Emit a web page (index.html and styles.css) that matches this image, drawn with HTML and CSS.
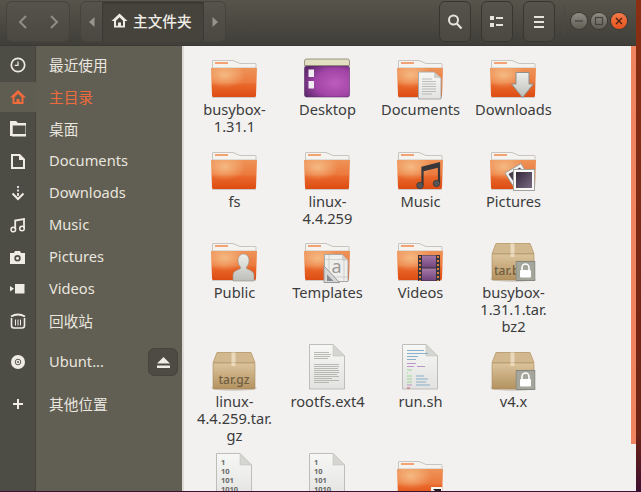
FILE: index.html
```html
<!DOCTYPE html>
<html lang="zh">

<head>
    <meta charset="UTF-8">
    <meta name="viewport" content="width=device-width, initial-scale=1.0">
    <title>主文件夹</title>
    <link rel="stylesheet" href="styles.css">
</head>

<body>
    <!-- Shared pieces of the file icons -->
    <svg class="defs" xmlns="http://www.w3.org/2000/svg">
        <defs>
            <linearGradient id="folderBody" x1="0" y1="0" x2="0" y2="1">
                <stop offset="0" stop-color="#ee9358" />
                <stop offset="0.5" stop-color="#ec7a3e" />
                <stop offset="0.58" stop-color="#e9672a" />
                <stop offset="1" stop-color="#dd4c12" />
            </linearGradient>
            <radialGradient id="folderGlow" cx="0.3" cy="0.25" r="0.45">
                <stop offset="0" stop-color="#f8cf9a" stop-opacity="0.7" />
                <stop offset="1" stop-color="#f8cf9a" stop-opacity="0" />
            </radialGradient>
            <radialGradient id="desktopBody" cx="0.68" cy="0.55" r="0.75">
                <stop offset="0" stop-color="#bd5cbb" />
                <stop offset="0.6" stop-color="#a044a6" />
                <stop offset="1" stop-color="#5f2a6e" />
            </radialGradient>
            <linearGradient id="paper" x1="0" y1="0" x2="0" y2="1">
                <stop offset="0" stop-color="#f7f7f6" />
                <stop offset="1" stop-color="#e2e2e0" />
            </linearGradient>
            <linearGradient id="emblemGray" x1="0" y1="0" x2="0" y2="1">
                <stop offset="0" stop-color="#eeeeec" />
                <stop offset="1" stop-color="#bdbdb9" />
            </linearGradient>
            <linearGradient id="photo" x1="0" y1="0" x2="1" y2="1">
                <stop offset="0" stop-color="#34283a" />
                <stop offset="1" stop-color="#7a6a84" />
            </linearGradient>
            <linearGradient id="boxBody" x1="0" y1="0" x2="0" y2="1">
                <stop offset="0" stop-color="#dcc49c" />
                <stop offset="1" stop-color="#b3925f" />
            </linearGradient>
            <linearGradient id="filmFrame" x1="0" y1="0" x2="0" y2="1">
                <stop offset="0" stop-color="#a678a8" />
                <stop offset="1" stop-color="#71447c" />
            </linearGradient>

            <symbol id="folder" viewBox="0 0 48 48">
                <path d="M2.5 16V9Q2.5 8.500 3 8.500H23L30 11.500H45.500Q46 11.500 46 12V16Z" fill="#f5f3f0" stroke="#c8c4bf" />
                <rect x="5" y="10" width="13" height="2" fill="#f3a274" />
                <path d="M1 16H47L46 43.500Q46 45 44.500 45H3.500Q2 45 2 43.500Z" fill="url(#folderBody)" />
                <path d="M1 16H47L46 43.500Q46 45 44.500 45H3.500Q2 45 2 43.500Z" fill="url(#folderGlow)" />
                <path d="M2 45.500H46" stroke="#cfcac5" />
            </symbol>

            <symbol id="box" viewBox="0 0 48 48">
                <ellipse cx="24" cy="44" rx="23" ry="3" fill="#d4d1cc" />
                <path d="M7 8.500H41L45 19H3Z" fill="#d2b88f" stroke="#bfa276" />
                <rect x="21.500" y="8.500" width="4" height="13" fill="#ead9bd" />
                <rect x="3" y="19" width="42" height="26" rx="1" fill="url(#boxBody)" stroke="#a98a5c" stroke-width="0.600" />
                <rect x="21.500" y="19" width="4" height="3" fill="#ead9bd" />
            </symbol>

            <symbol id="lock" viewBox="0 0 20 20">
                <rect x="0.500" y="0.500" width="19" height="19" fill="#a4a69c" stroke="#85877e" />
                <path d="M6.500 9V6.500a3.500 3.500 0 0 1 7 0V9" fill="none" stroke="#fff" stroke-width="1.600" />
                <rect x="4.500" y="9" width="11" height="7.500" rx="1" fill="#fff" />
            </symbol>

            <symbol id="page" viewBox="0 0 48 48">
                <path d="M6.500 0.500H30L41.500 12V45H6.500Z" fill="url(#paper)" stroke="#bdbdba" />
                <path d="M30 0.500V12H41.500Z" fill="#d5d5d2" stroke="#c4c4c1" stroke-width="0.600" />
            </symbol>
        </defs>
    </svg>

    <div class="window">
        <div class="headerbar">
            <div class="btn-group nav-group">
                <span class="nav-half">
                    <svg width="10" height="14" viewBox="0 0 10 14"><path d="M8 1L2 7l6 6" fill="none" stroke="#8f8d85" stroke-width="2" /></svg>
                </span>
                <span class="nav-half">
                    <svg width="10" height="14" viewBox="0 0 10 14"><path d="M2 1l6 6-6 6" fill="none" stroke="#8f8d85" stroke-width="2" /></svg>
                </span>
            </div>

            <div class="btn-group path-group">
                <span class="path-arrow">
                    <svg width="6" height="10" viewBox="0 0 6 10"><path d="M5.500 0v10L0 5z" fill="#96948c" /></svg>
                </span>
                <span class="path-current">
                    <svg width="17" height="15" viewBox="0 0 16 15"><path d="M8 0.500L0 8h2.500v6.500h11V8H16zM4.500 7.700L8 4.300l3.500 3.400v5h-7zM6.500 9.500h3v3.200h-3z" fill="#efece6" fill-rule="evenodd" /></svg>
                    主文件夹
                </span>
                <span class="path-arrow">
                    <svg width="6" height="10" viewBox="0 0 6 10"><path d="M0.500 0v10L6 5z" fill="#96948c" /></svg>
                </span>
            </div>

            <div class="spacer"></div>

            <span class="tool-btn">
                <svg width="16" height="16" viewBox="0 0 16 16"><circle cx="6.500" cy="6" r="4.500" fill="none" stroke="#e6e3dc" stroke-width="2" /><path d="M9.800 9.500L14.500 14.500" stroke="#e6e3dc" stroke-width="2.200" /></svg>
            </span>
            <span class="tool-btn">
                <svg width="14" height="12" viewBox="0 0 14 12"><path d="M0 0h4v4H0zM0 7h4v4H0zM6 1h7v2H6zM6 8h7v2H6z" fill="#e6e3dc" /></svg>
            </span>
            <span class="tool-btn">
                <svg width="12" height="12" viewBox="0 0 12 12"><path d="M1 0h10v2H1zM1 5h10v2H1zM1 10h10v2H1z" fill="#e6e3dc" /></svg>
            </span>

            <div class="header-sep"></div>

            <div class="win-buttons">
                <span class="win-btn">
                    <svg width="10" height="10" viewBox="0 0 10 10"><path d="M1 5h8" stroke="#45433c" stroke-width="1.300" /></svg>
                </span>
                <span class="win-btn">
                    <svg width="10" height="10" viewBox="0 0 10 10"><rect x="1.500" y="1.500" width="7" height="7" fill="none" stroke="#45433c" stroke-width="1.200" /></svg>
                </span>
                <span class="win-btn win-close">
                    <svg width="10" height="10" viewBox="0 0 10 10"><path d="M2 2l6 6M8 2l-6 6" stroke="#4a2010" stroke-width="1.400" /></svg>
                </span>
            </div>
        </div>

        <div class="main">
            <nav class="sidebar">
                <div class="side-row">
                    <span class="side-icon"><svg width="16" height="16" viewBox="0 0 16 16"><circle cx="8" cy="8" r="6.700" fill="none" stroke="#efece6" stroke-width="1.700" /><path d="M8 4.500V8.300H4.800" fill="none" stroke="#efece6" stroke-width="1.200" /></svg></span>
                    <span class="side-label">最近使用</span>
                </div>
                <div class="side-row active">
                    <span class="side-icon"><svg width="16" height="16" viewBox="0 0 16 16"><path d="M8 1L0 8.500h2.500V15h11V8.500H16zM4.500 8.200L8 4.800l3.500 3.400V13h-7zM6.500 10h3v3h-3z" fill="#f06b3c" fill-rule="evenodd" /></svg></span>
                    <span class="side-label">主目录</span>
                </div>
                <div class="side-row">
                    <span class="side-icon"><svg width="16" height="16" viewBox="0 0 16 16"><path d="M0 0h6l2 2h8v2H2.500v9H16v2H0z" fill="#efece6" /><path d="M2 4h14v11H2z" fill="none" stroke="#efece6" /></svg></span>
                    <span class="side-label">桌面</span>
                </div>
                <div class="side-row">
                    <span class="side-icon"><svg width="14" height="15" viewBox="0 0 14 15"><path d="M1 1h7.500L13 5.500V14H1z" fill="none" stroke="#efece6" stroke-width="2" /><path d="M8 1v5h5z" fill="#efece6" /></svg></span>
                    <span class="side-label">Documents</span>
                </div>
                <div class="side-row">
                    <span class="side-icon"><svg width="14" height="15" viewBox="0 0 14 15"><path d="M7 0v2M7 3.500v2M7 7v3" stroke="#efece6" stroke-width="1.800" /><path d="M1.500 7.500L7 13l5.500-5.500" fill="none" stroke="#efece6" stroke-width="2" /></svg></span>
                    <span class="side-label">Downloads</span>
                </div>
                <div class="side-row">
                    <span class="side-icon"><svg width="16" height="15" viewBox="0 0 16 15"><path d="M5.200 11V2.500L14 1v9" fill="none" stroke="#efece6" stroke-width="1.800" /><circle cx="3.300" cy="11.500" r="2.300" fill="none" stroke="#efece6" stroke-width="1.500" /><circle cx="12" cy="10.500" r="2.300" fill="none" stroke="#efece6" stroke-width="1.500" /></svg></span>
                    <span class="side-label">Music</span>
                </div>
                <div class="side-row">
                    <span class="side-icon"><svg width="15" height="13" viewBox="0 0 15 13"><path d="M0 2h4l1-2h5l1 2h4v11H0zM7.500 4a3.200 3.200 0 1 0 0 6.400 3.200 3.200 0 0 0 0-6.400z" fill="#efece6" fill-rule="evenodd" /><circle cx="7.500" cy="7.200" r="1.500" fill="#efece6" /></svg></span>
                    <span class="side-label">Pictures</span>
                </div>
                <div class="side-row">
                    <span class="side-icon"><svg width="15" height="10" viewBox="0 0 15 10"><path d="M5 0h9.500v9.500H5zM0 2l4 2.800L0 7.500z" fill="#efece6" /></svg></span>
                    <span class="side-label">Videos</span>
                </div>
                <div class="side-row">
                    <span class="side-icon"><svg width="16" height="16" viewBox="0 0 16 16"><path d="M1 3.500Q8 -0.500 15 3.500" fill="none" stroke="#efece6" stroke-width="2" /><path d="M1.500 5v7.500Q1.500 15 4 15h8q2.500 0 2.500-2.500V5" fill="none" stroke="#efece6" stroke-width="1.600" /><path d="M5.500 6.500v6M8 6.500v6M10.500 6.500v6" stroke="#efece6" /></svg></span>
                    <span class="side-label">回收站</span>
                </div>
                <div class="side-row side-row-disk">
                    <span class="side-icon"><svg width="14" height="14" viewBox="0 0 14 14"><circle cx="7" cy="7" r="7" fill="#efece6" /><circle cx="7" cy="7" r="2.800" fill="none" stroke="#5a584f" /><circle cx="7" cy="7" r="1" fill="#5a584f" /></svg></span>
                    <span class="side-label">Ubunt...</span>
                    <span class="eject-btn"><svg width="13" height="11" viewBox="0 0 13 11"><path d="M6.500 0L13 6.500H0zM0 8.500h13V11H0z" fill="#efece6" /></svg></span>
                </div>
                <div class="side-row side-row-other">
                    <span class="side-icon"><svg width="10" height="10" viewBox="0 0 10 10"><path d="M4 0h2v4h4v2H6v4H4V6H0V4h4z" fill="#efece6" /></svg></span>
                    <span class="side-label">其他位置</span>
                </div>
            </nav>

            <div class="content">
                <div class="file-grid">
                    <div class="file-item">
                        <svg class="file-icon" viewBox="0 0 48 48"><use href="#folder" /></svg>
                        <div class="file-name">busybox-<br>1.31.1</div>
                    </div>
                    <div class="file-item">
                        <svg class="file-icon" viewBox="0 0 48 48">
                            <rect x="1.500" y="14" width="45" height="31" rx="2" fill="url(#desktopBody)" stroke="#5d2a68" stroke-width="0.600" />
                            <path d="M1.500 13.500V9q0-2 2-2h41q2 0 2 2v4.500z" fill="#e2dfc3" stroke="#77725a" stroke-width="0.700" />
                            <path d="M5.500 17.500h5.500v7.500H5.500zM5.500 29h5.500v7.500H5.500z" fill="#f1ecf2" />
                        </svg>
                        <div class="file-name">Desktop</div>
                    </div>
                    <div class="file-item">
                        <svg class="file-icon" viewBox="0 0 48 48">
                            <use href="#folder" />
                            <path d="M22.500 20H38L45 26V47H22.500Z" fill="url(#paper)" stroke="#a9a9a6" />
                            <path d="M38 20v6h7z" fill="#cfcfcc" />
                            <path d="M26 27h10M26 29.500h14M26 32h14M26 34.500h14M26 37h14M26 39.500h14M26 42h10" stroke="#a8a8a5" stroke-width="0.700" />
                        </svg>
                        <div class="file-name">Documents</div>
                    </div>
                    <div class="file-item">
                        <svg class="file-icon" viewBox="0 0 48 48">
                            <use href="#folder" />
                            <path d="M27 20.500H40V32H44.500L33.500 45.500L22.500 32H27Z" fill="url(#emblemGray)" stroke="#8f8f8b" />
                        </svg>
                        <div class="file-name">Downloads</div>
                    </div>

                    <div class="file-item">
                        <svg class="file-icon" viewBox="0 0 48 48"><use href="#folder" /></svg>
                        <div class="file-name">fs</div>
                    </div>
                    <div class="file-item">
                        <svg class="file-icon" viewBox="0 0 48 48"><use href="#folder" /></svg>
                        <div class="file-name">linux-<br>4.4.259</div>
                    </div>
                    <div class="file-item">
                        <svg class="file-icon" viewBox="0 0 48 48">
                            <use href="#folder" />
                            <path d="M26.500 41V23.500L43 19.500V39" fill="none" stroke="#38373a" stroke-width="2.200" />
                            <path d="M26.500 23.500L43 19.500V23.500L26.500 27.500Z" fill="#38373a" />
                            <circle cx="24" cy="41.500" r="3.300" fill="#555557" stroke="#2f2e30" stroke-width="0.600" />
                            <circle cx="40.500" cy="39.500" r="3.300" fill="#555557" stroke="#2f2e30" stroke-width="0.600" />
                        </svg>
                        <div class="file-name">Music</div>
                    </div>
                    <div class="file-item">
                        <svg class="file-icon" viewBox="0 0 48 48">
                            <use href="#folder" />
                            <path d="M16 29L32 19.500L42 36L26 45Z" fill="#f3f3f1" stroke="#9c9c98" />
                            <path d="M19.500 30L31 23.500L38 35L27 41.500Z" fill="url(#photo)" />
                            <rect x="24.500" y="25.500" width="21" height="21" fill="#f8f8f7" stroke="#a3a3a0" />
                            <rect x="27" y="28" width="16" height="16" fill="url(#photo)" />
                        </svg>
                        <div class="file-name">Pictures</div>
                    </div>

                    <div class="file-item">
                        <svg class="file-icon" viewBox="0 0 48 48">
                            <use href="#folder" />
                            <path d="M33.500 19c3.500 0 5.500 3 5.500 6.500 0 2.500-1 5-2.500 6.500v1.500c2 1.500 7.500 2 7.500 7V46H23v-5.500c0-5 5.500-5.500 7.500-7V32C29 30.500 28 28 28 25.500 28 22 30 19 33.500 19Z" fill="url(#emblemGray)" stroke="#96968f" stroke-width="0.600" />
                        </svg>
                        <div class="file-name">Public</div>
                    </div>
                    <div class="file-item">
                        <svg class="file-icon" viewBox="0 0 48 48">
                            <use href="#folder" />
                            <path d="M21.500 19.500H39L45 25.500V46.500H21.500Z" fill="#eeeeec" stroke="#a9a9a6" />
                            <path d="M39 19.500v6h6z" fill="#cfcfcc" />
                            <path d="M26 19.500v27M41 24v22.500M21.500 24.500h21M21.500 42h23.500" stroke="#c1c1be" stroke-width="0.700" />
                            <text class="emblem-letter" x="33.500" y="38" text-anchor="middle">a</text>
                            <path d="M21 31L36.500 47.500H21Z" fill="#d6d6d4" stroke="#9797a0" />
                            <path d="M24 39.500L30.500 46H24Z" fill="#8b8b94" />
                        </svg>
                        <div class="file-name">Templates</div>
                    </div>
                    <div class="file-item">
                        <svg class="file-icon" viewBox="0 0 48 48">
                            <use href="#folder" />
                            <rect x="22" y="20" width="22" height="26" fill="#38333a" />
                            <rect x="26" y="20.500" width="14" height="12" fill="url(#filmFrame)" />
                            <rect x="26" y="33.500" width="14" height="12" fill="url(#filmFrame)" />
                            <path d="M24 21v25M42 21v25" stroke="#d9803f" stroke-width="2" stroke-dasharray="2 2" />
                        </svg>
                        <div class="file-name">Videos</div>
                    </div>
                    <div class="file-item">
                        <svg class="file-icon" viewBox="0 0 48 48">
                            <use href="#box" />
                            <text class="box-label" x="5" y="40">tar.b</text>
                            <use href="#lock" x="26.500" y="26" width="20" height="20" />
                        </svg>
                        <div class="file-name">busybox-<br>1.31.1.tar.<br>bz2</div>
                    </div>

                    <div class="file-item">
                        <svg class="file-icon" viewBox="0 0 48 48">
                            <use href="#box" />
                            <text class="box-label" x="24" y="40" text-anchor="middle">tar.gz</text>
                        </svg>
                        <div class="file-name">linux-<br>4.4.259.tar.<br>gz</div>
                    </div>
                    <div class="file-item">
                        <svg class="file-icon" viewBox="0 0 48 48">
                            <use href="#page" />
                            <path d="M11 8.500h15M11 10.500h17M11 12.500h16M11 14.500h14M11 20.500h25M11 22.500h25M11 24.500h24M11 26.500h25M11 28.500h25M11 30.500h23M11 32.500h25M11 34.500h18M11 36.500h25M11 38.500h15" stroke="#a9a9a6" stroke-width="0.800" />
                        </svg>
                        <div class="file-name">rootfs.ext4</div>
                    </div>
                    <div class="file-item">
                        <svg class="file-icon" viewBox="0 0 48 48">
                            <use href="#page" />
                            <path d="M11 6.500h17M11 9.500h21M11 12.500h11M11 15.500h9" stroke="#7da9c7" stroke-width="0.900" />
                            <path d="M11 19.500h9M11 22.500h7M21 22.500h8" stroke="#b78cc4" stroke-width="0.900" />
                            <path d="M11 26h5M11 29h1M11 32h5M11 35h5M11 38h5" stroke="#93d48b" stroke-width="0.900" />
                            <path d="M20 32h8M20 35h12M20 38h10M20 41h14" stroke="#7da9c7" stroke-width="0.900" />
                            <path d="M11 41h5" stroke="#b78cc4" stroke-width="0.900" />
                            <path d="M11 44h3" stroke="#c24a4a" stroke-width="0.900" />
                        </svg>
                        <div class="file-name">run.sh</div>
                    </div>
                    <div class="file-item">
                        <svg class="file-icon" viewBox="0 0 48 48">
                            <use href="#box" />
                            <use href="#lock" x="26.500" y="26" width="20" height="20" />
                        </svg>
                        <div class="file-name">v4.x</div>
                    </div>

                    <div class="file-item">
                        <svg class="file-icon" viewBox="0 0 48 48">
                            <use href="#page" />
                            <text class="bin-text" x="11" y="12">1</text>
                            <text class="bin-text" x="11" y="21">10</text>
                            <text class="bin-text" x="11" y="30">101</text>
                            <text class="bin-text" x="11" y="39">1010</text>
                        </svg>
                    </div>
                    <div class="file-item">
                        <svg class="file-icon" viewBox="0 0 48 48">
                            <use href="#page" />
                            <text class="bin-text" x="11" y="12">1</text>
                            <text class="bin-text" x="11" y="21">10</text>
                            <text class="bin-text" x="11" y="30">101</text>
                            <text class="bin-text" x="11" y="39">1010</text>
                        </svg>
                    </div>
                    <div class="file-item">
                        <svg class="file-icon" viewBox="0 0 48 48">
                            <use href="#folder" />
                            <rect x="35" y="34" width="11" height="11" fill="#f6f6f4" />
                            <path d="M37 36h8v8z" fill="#222" />
                        </svg>
                    </div>
                </div>
                <div class="scrollbar"></div>
            </div>
        </div>
    </div>
</body>

</html>
```

FILE: styles.css
```css
html, body {
    height: 100%;
}
body {
    margin: 0;
    background: linear-gradient(#8a2f12, #6d2415 88%, #3d1030);
    font-family: "Noto Sans", "Noto Sans CJK SC", sans-serif;
    font-size: 14.67px;
    overflow: hidden;
}
.defs {
    display: block;
    width: 0;
    height: 0;
    overflow: hidden;
}
.window {
    width: 636px;
    height: 491px;
    display: flex;
    flex-direction: column;
    overflow: hidden;
}

/* Header bar */
.headerbar {
    height: 46px;
    flex: none;
    box-sizing: border-box;
    padding: 1px 0 0 6px;
    display: flex;
    align-items: flex-start;
    background: linear-gradient(#57544b, #3f3e38);
    border-bottom: 1px solid #3a3933;
}
.btn-group {
    height: 41px;
    box-sizing: border-box;
    display: flex;
    border: 1px solid #45433c;
    border-radius: 6px;
    background: linear-gradient(#55534a, #4a4841);
}
.nav-group {
    width: 64px;
}
.nav-half {
    flex: 1;
    display: flex;
    align-items: center;
    justify-content: center;
}
.path-group {
    width: 146px;
    margin-left: 10px;
}
.path-arrow {
    flex: 1;
    display: flex;
    align-items: center;
    justify-content: center;
}
.path-current {
    width: 102px;
    flex: none;
    display: flex;
    align-items: center;
    gap: 5px;
    box-sizing: border-box;
    padding: 0 0 2px 8px;
    color: #efece6;
    font-weight: 500;
    background: #45433c;
    box-shadow: inset 0 2px 2px -1px #33322c;
    border-left: 1px solid #3b3a34;
    border-right: 1px solid #3b3a34;
}
.spacer {
    flex: 1;
}
.tool-btn {
    width: 32px;
    height: 41px;
    box-sizing: border-box;
    margin-left: 10px;
    display: flex;
    align-items: center;
    justify-content: center;
    border: 1px solid #37362f;
    border-radius: 6px;
    background: linear-gradient(#55534a, #4a4841);
}
.header-sep {
    width: 1px;
    height: 32px;
    margin: 4px 6px 0 9px;
    background: #4b4a42;
}
.win-buttons {
    display: flex;
    gap: 4px;
    margin: 12px 9px 0 0;
}
.win-btn {
    width: 16px;
    height: 16px;
    border-radius: 50%;
    display: flex;
    align-items: center;
    justify-content: center;
    background: linear-gradient(#8e8c83, #5f5d54);
    box-shadow: 0 0 0 1px #3a3932;
}
.win-close {
    background: linear-gradient(#f47a48, #e4521f);
}

/* Sidebar */
.main {
    flex: 1;
    display: flex;
    min-height: 0;
}
.sidebar {
    width: 182px;
    flex: none;
    box-sizing: border-box;
    padding-top: 4px;
    display: flex;
    flex-direction: column;
    gap: 2px;
    background: linear-gradient(90deg, #4e4d45 35px, #45443d 35px, #45443d 36px, #615e53 36px);
}
.side-row {
    height: 30px;
    flex: none;
    display: flex;
    align-items: center;
    color: #e9e6df;
}
.side-icon {
    width: 35px;
    height: 100%;
    margin-right: 14px;
    flex: none;
    display: flex;
    align-items: center;
    justify-content: center;
}
.side-label {
    flex: 1;
    padding-bottom: 2px;
}
.active .side-icon {
    width: 36px;
    margin-right: 13px;
    background: #5f5c51;
}
.active .side-label {
    color: #f06b3c;
}
.side-row-disk {
    margin-top: 9px;
}
.side-row-other {
    margin-top: 10px;
}
.eject-btn {
    width: 30px;
    height: 28px;
    margin-right: 4px;
    display: flex;
    align-items: center;
    justify-content: center;
    border-radius: 7px;
    background: #4d4b43;
    box-shadow: inset 0 0 0 1px #46443d;
}

/* File view */
.content {
    flex: 1;
    position: relative;
    overflow: hidden;
    background: #f2f1f0;
    border-left: 2px solid #dcdad7;
}
.file-grid {
    padding: 6px 0 0 3px;
    display: grid;
    grid-template-columns: repeat(4, 93px);
    grid-template-rows: 92px 91px 109px 109px 48px;
    color: #3c3c3c;
}
.file-item {
    display: flex;
    flex-direction: column;
    align-items: center;
}
.file-icon {
    width: 48px;
    height: 48px;
    flex: none;
    overflow: visible;
}
.file-name {
    margin-top: 1px;
    padding-left: 2px;
    line-height: 17px;
    text-align: center;
}
.box-label {
    font-family: "Noto Sans", sans-serif;
    font-size: 12px;
    font-weight: 500;
    fill: #6f5d43;
}
.bin-text {
    font-family: "Noto Sans", sans-serif;
    font-size: 7.500px;
    font-weight: 700;
    fill: #6a6a68;
}
.emblem-letter {
    font-family: "Noto Sans", sans-serif;
    font-size: 18px;
    fill: #9a9a98;
}
.scrollbar {
    position: absolute;
    top: 0;
    right: 0;
    width: 5px;
    height: 398px;
    background: #ef8560;
}
```
